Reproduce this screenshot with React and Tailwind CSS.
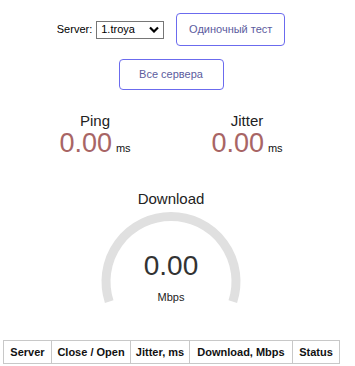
const ff = { fontFamily: '"Liberation Sans", Arial, sans-serif' };

const Metric = ({ label, value, unit }) => (
  <div className="flex flex-col items-center">
    <div className="text-[15px] leading-[15px] text-[#222]">{label}</div>
    <div className="flex items-baseline">
      <span className="text-[27px] leading-[31px] text-[#a86565]">{value}</span>
      <span className="text-[11px] ml-[4px] text-[#111]">{unit}</span>
    </div>
  </div>
);

const Gauge = () => (
  <div className="relative w-[160px] h-[100px]">
    <svg width="160" height="100" viewBox="0 0 160 100" className="block">
      <path
        d="M 18.2 94.6 A 65 65 0 1 1 141.8 94.6"
        fill="none"
        stroke="#e0e0e0"
        strokeWidth="9"
      />
    </svg>
    <div className="absolute left-0 right-0 top-[45px] text-center text-[28px] leading-[28px] text-[#333]">
      0.00
    </div>
    <div className="absolute left-0 right-0 top-[84px] text-center text-[11px] leading-[13px] text-[#222]">
      Mbps
    </div>
  </div>
);

export default function App() {
  const cols = [
    { name: 'Server', w: 'w-[48px]' },
    { name: 'Close / Open', w: 'w-[79px]' },
    { name: 'Jitter, ms', w: 'w-[59px]' },
    { name: 'Download, Mbps', w: 'w-[103px]' },
    { name: 'Status', w: 'w-[47px]' },
  ];

  return (
    <div className="w-[342px] bg-white text-black" style={ff}>
      {/* controls */}
      <div className="flex items-center justify-center pt-[13px]">
        <span className="text-[11px] leading-[13px]">Server:</span>
        <div className="ml-[4px] flex items-center justify-between w-[68px] h-[18px] border border-[#767676] pl-[4px] pr-[4px]">
          <span className="text-[11px] leading-[13px] text-black">1.troya</span>
          <svg width="10" height="7" viewBox="0 0 10 7">
            <polyline points="1,1.5 5,5.5 9,1.5" fill="none" stroke="#000" strokeWidth="2.2" />
          </svg>
        </div>
        <button className="ml-[12px] w-[109px] h-[33px] border border-[#6b6bee] rounded-[4px] text-[11px] text-[#5c5c9e] bg-white">
          Одиночный тест
        </button>
      </div>
      <div className="flex justify-center mt-[13px]">
        <button className="w-[105px] h-[31px] border border-[#6b6bee] rounded-[4px] text-[11px] text-[#5c5c9e] bg-white">
          Все сервера
        </button>
      </div>

      {/* ping / jitter */}
      <div className="grid grid-cols-2 mx-[19px] mt-[23px]">
        <Metric label="Ping" value="0.00" unit="ms" />
        <Metric label="Jitter" value="0.00" unit="ms" />
      </div>

      {/* download */}
      <div className="flex flex-col items-center mt-[31px]">
        <div className="text-[15px] leading-[17px] text-[#222]">Download</div>
        <Gauge />
      </div>

      {/* results table */}
      <table className="border-collapse ml-[3px] mt-[33px]">
        <thead>
          <tr>
            {cols.map((c) => (
              <th
                key={c.name}
                className={`${c.w} h-[23px] p-0 border border-[#c8c8c8] text-[11px] font-bold text-[#111] text-center whitespace-nowrap`}
              >
                {c.name}
              </th>
            ))}
          </tr>
        </thead>
      </table>
    </div>
  );
}
